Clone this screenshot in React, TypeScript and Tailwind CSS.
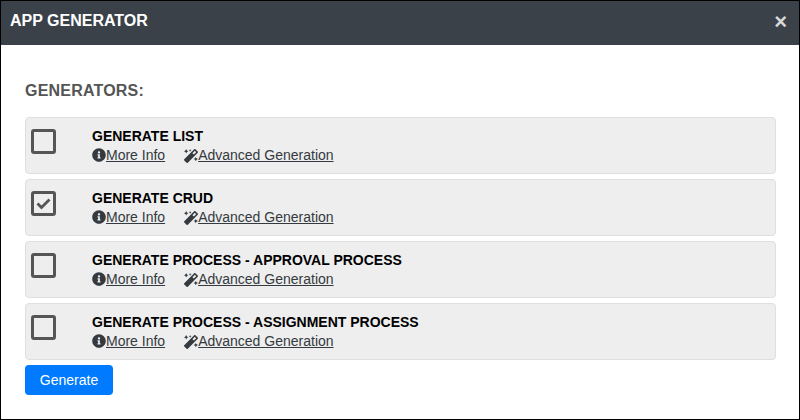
import {FaInfoCircle, FaMagic} from "react-icons/fa";

const generators = [
    {name: "GENERATE LIST", checked: false},
    {name: "GENERATE CRUD", checked: true},
    {name: "GENERATE PROCESS - APPROVAL PROCESS", checked: false},
    {name: "GENERATE PROCESS - ASSIGNMENT PROCESS", checked: false},
];

const GeneratorRow = ({name, checked}: {name: string; checked: boolean}) => {
    return (
        <div className="flex h-[57px] w-[751px] rounded border border-[#dfdfdf] bg-[#eeeeee]">
            <div className="ml-[5px] mt-[11px] flex h-[25px] w-[25px] items-center justify-center rounded-[3px] border-[3px] border-[#555555]">
                {checked && (
                    <svg width="15" height="12" viewBox="0 0 15 12" fill="none">
                        <path d="M1.5 5.5L5.5 9.5L13.5 1.5" stroke="#555555" strokeWidth="2.8"/>
                    </svg>
                )}
            </div>
            <div className="ml-[36px] mt-[10px]">
                <div className="text-[14px] leading-[17px] font-bold text-black">{name}</div>
                <div className="mt-[2px] flex text-[14px] leading-[17px] text-[#343a40]">
                    <a className="flex items-center">
                        <FaInfoCircle className="-mt-[1px] text-[14px]"/>
                        <span className="underline">More Info</span>
                    </a>
                    <a className="ml-[19px] flex items-center">
                        <FaMagic className="text-[14px]"/>
                        <span className="underline">Advanced Generation</span>
                    </a>
                </div>
            </div>
        </div>
    );
};

const App = () => {
    return (
        <div className="h-[420px] w-[800px] border border-black bg-white font-['Liberation_Sans',Arial,sans-serif]">
            <div className="flex h-[44px] items-center justify-between bg-[#3a4149] pr-[12px] pl-[9px]">
                <div className="-mt-[5px] text-[16px] font-bold text-white">APP GENERATOR</div>
                <div className="-mt-[3px] text-[22px] leading-none font-bold text-[#d8d8d8]">×</div>
            </div>
            <div className="px-[24px] pt-[36px]">
                <div className="text-[16px] leading-[20px] font-bold tracking-[0.2px] text-[#555555]">GENERATORS:</div>
                <div className="mt-[16px] flex flex-col gap-[5px]">
                    {generators.map(g => (
                        <GeneratorRow key={g.name} name={g.name} checked={g.checked}/>
                    ))}
                </div>
                <button className="mt-[5px] h-[30px] w-[88px] rounded bg-[#007bff] text-[14px] text-white">Generate</button>
            </div>
        </div>
    );
};

export default App;
